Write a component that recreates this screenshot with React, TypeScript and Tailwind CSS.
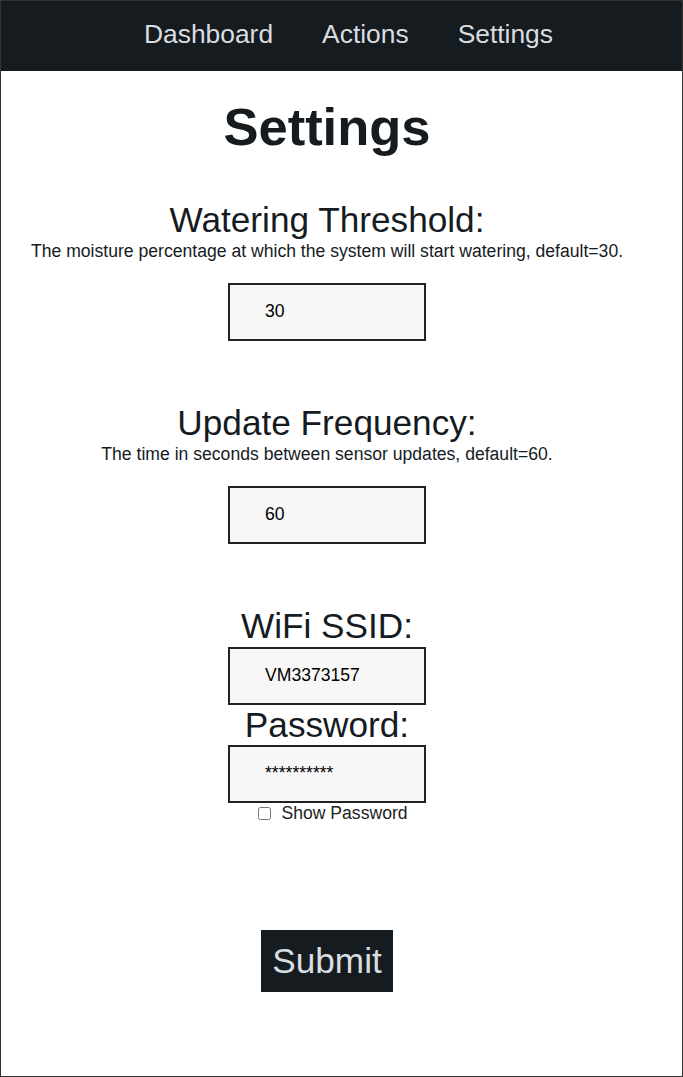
import { useState } from "react";

const font = "font-['Liberation_Sans',Arial,sans-serif]";

function Field({ value }: { value: string }) {
  return (
    <input
      type="text"
      value={value}
      readOnly
      className="box-border h-[58px] w-[198px] border-2 border-[#222] bg-[#f7f7f7] pb-px pl-[35px] text-[17.6px] text-black outline-none"
    />
  );
}

export default function App() {
  const [show, setShow] = useState(false);

  return (
    <div className={`${font} box-border flex h-[1077px] flex-col border border-[#333] bg-white text-[#151b1f]`}>
      <nav className="flex h-[70px] shrink-0 items-center justify-center gap-[49px] bg-[#151b1f] pb-[3px] pl-[14px] text-[26.4px] text-[#d9dde0]">
        <a>Dashboard</a>
        <a>Actions</a>
        <a>Settings</a>
      </nav>

      <main className="flex flex-col items-center pr-[29px] text-center">
        <h1 className="mt-[26px] text-[52.5px] font-bold leading-[60px]">Settings</h1>

        <h2 className="mt-[43px] text-[35.2px] leading-[40px]">Watering Threshold:</h2>
        <p className="text-[17.6px] leading-[22px]">
          The moisture percentage at which the system will start watering, default=30.
        </p>
        <div className="mt-[21px]">
          <Field value="30" />
        </div>

        <h2 className="mt-[62px] text-[35.2px] leading-[40px]">Update Frequency:</h2>
        <p className="text-[17.6px] leading-[22px]">
          The time in seconds between sensor updates, default=60.
        </p>
        <div className="mt-[21px]">
          <Field value="60" />
        </div>

        <h2 className="mt-[62px] text-[35.2px] leading-[40px]">WiFi SSID:</h2>
        <div className="mt-px">
          <Field value="VM3373157" />
        </div>
        <h2 className="text-[35.2px] leading-[40px]">Password:</h2>
        <Field value={show ? "VMpassword" : "**********"} />
        <label className="flex h-[20px] items-center gap-[10px] pl-[12px] text-[17.6px] text-[#222]">
          <input
            type="checkbox"
            checked={show}
            onChange={(e) => setShow(e.target.checked)}
            className="h-[13px] w-[13px]"
          />
          Show Password
        </label>

        <button className="mt-[107px] bg-[#151b1f] px-[11px] text-[35.2px] leading-[62px] text-[#d9dde0]">
          Submit
        </button>
      </main>
    </div>
  );
}
